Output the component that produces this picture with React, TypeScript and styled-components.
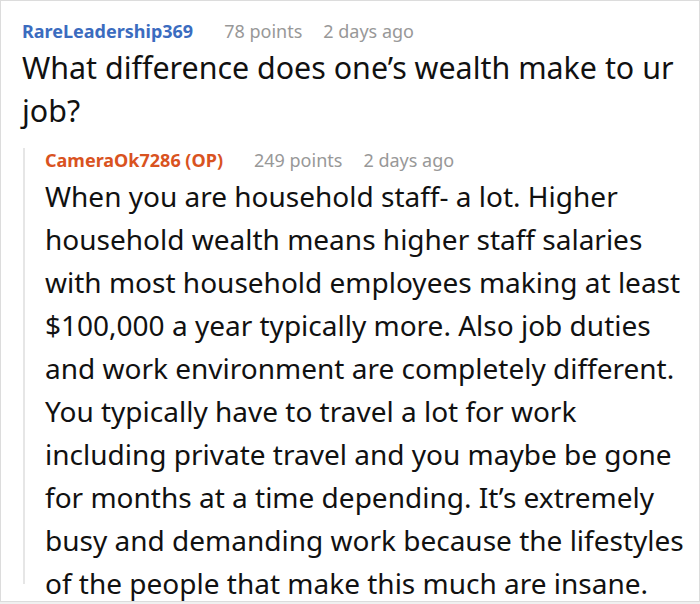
import styled, { createGlobalStyle } from "styled-components";

const GlobalStyle = createGlobalStyle`
  html, body {
    margin: 0;
    padding: 0;
    background: #f0f0f0;
  }
`;

const Card = styled.div`
  box-sizing: border-box;
  width: 700px;
  height: 602px;
  background: #ffffff;
  border: 1px solid #dcdcdc;
  padding: 18px 0 0 21px;
  font-family: "Noto Sans", "Open Sans", sans-serif;
  overflow: hidden;
`;

const Meta = styled.div`
  display: flex;
  align-items: baseline;
  font-size: 18px;
  line-height: 24px;
`;

const Author = styled.span<{ $color: string }>`
  font-weight: 700;
  color: ${(p) => p.$color};
  margin-right: 31px;
`;

const Info = styled.span`
  color: #989898;
  margin-right: 21px;
`;

const Body = styled.p<{ $size: number }>`
  margin: 3px 0 0;
  font-size: ${(p) => p.$size}px;
  line-height: 43px;
  color: #111111;
`;

const Reply = styled.div`
  margin: 24px 0 0 1px;
  border-left: 2px solid #e6e6e6;
  padding-left: 20px;
  height: 436px;
`;

const ReplyMeta = styled(Meta)`
  margin-top: -8px;
`;

export default function App() {
  return (
    <>
      <GlobalStyle />
      <Card>
        <Meta>
          <Author $color="#3b6cbf">RareLeadership369</Author>
          <Info>78 points</Info>
          <Info>2 days ago</Info>
        </Meta>
        <Body $size={30.4}>What difference does one’s wealth make to ur job?</Body>
        <Reply>
          <ReplyMeta>
            <Author $color="#d9531f">CameraOk7286 (OP)</Author>
            <Info>249 points</Info>
            <Info>2 days ago</Info>
          </ReplyMeta>
          <Body $size={28}>
            When you are household staff- a lot. Higher household wealth means
            higher staff salaries with most household employees making at least
            $100,000 a year typically more. Also job duties and work environment
            are completely different. You typically have to travel a lot for
            work including private travel and you maybe be gone for months at a
            time depending. It’s extremely busy and demanding work because the
            lifestyles of the people that make this much are insane.
          </Body>
        </Reply>
      </Card>
    </>
  );
}
